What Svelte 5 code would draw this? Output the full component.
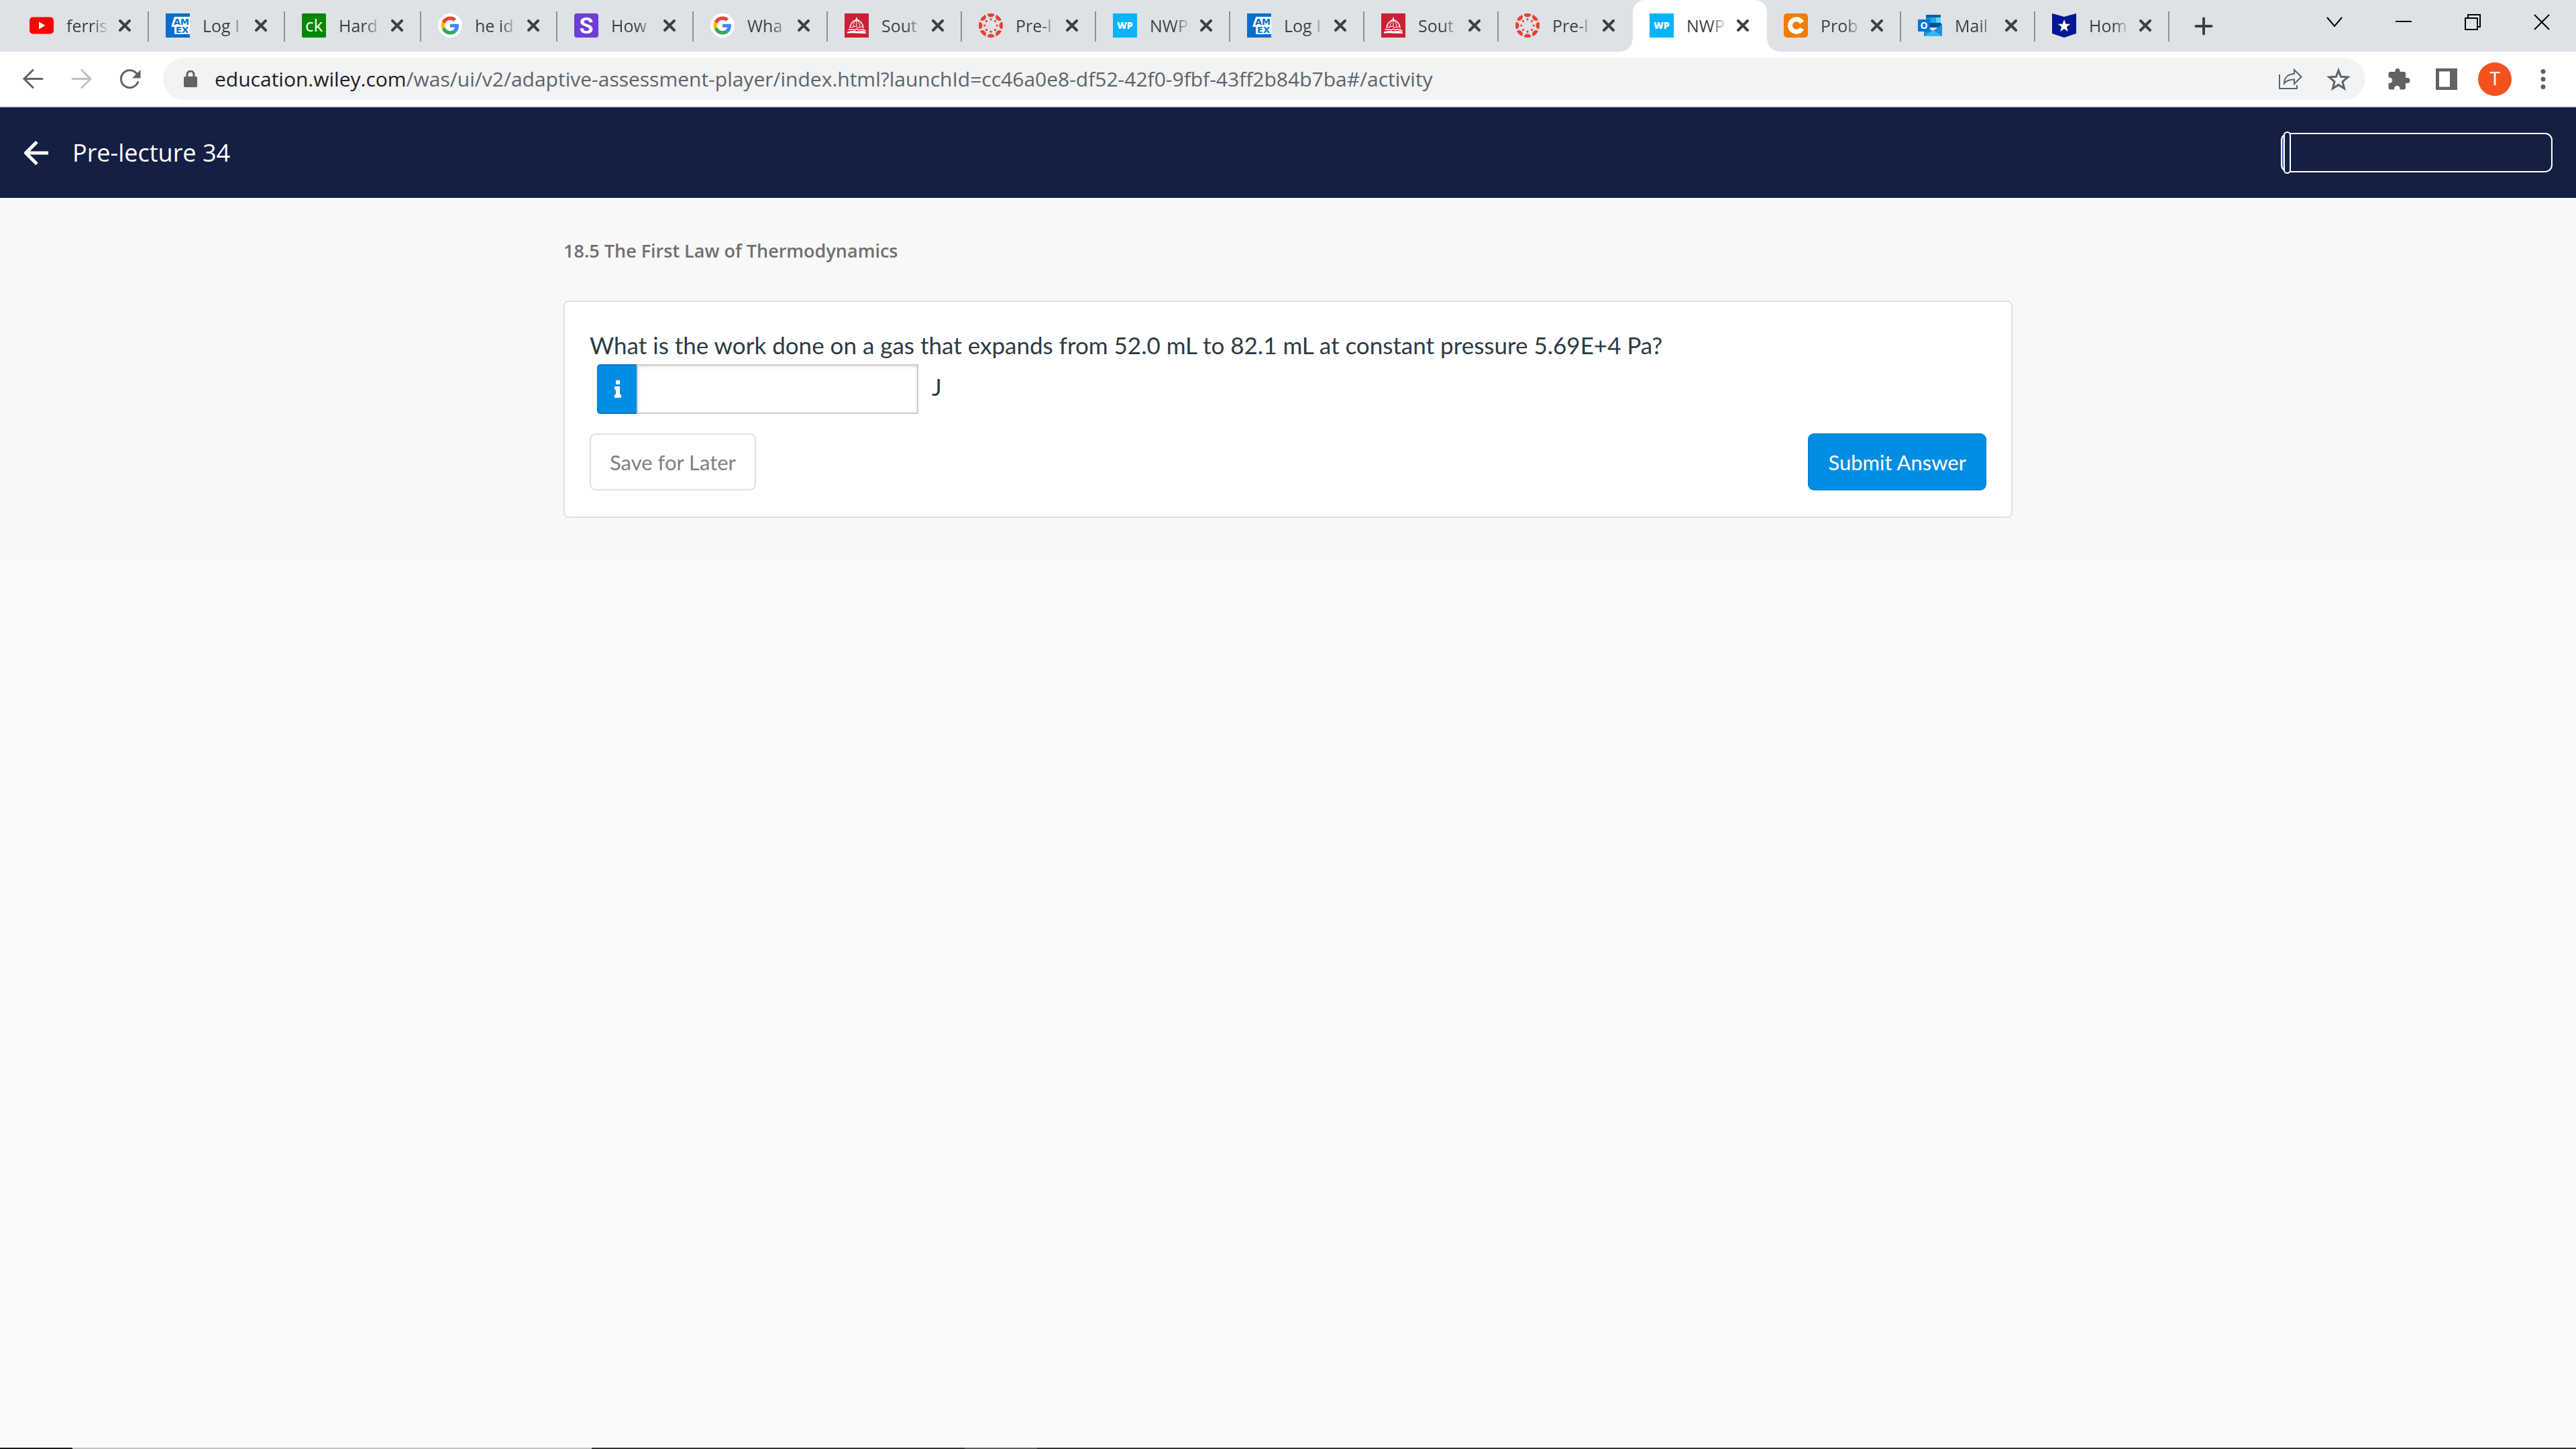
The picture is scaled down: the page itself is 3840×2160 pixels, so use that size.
<script lang="ts">
	const tabs = [
		{ icon: 'youtube', title: 'ferris' },
		{ icon: 'amex', title: 'Log I' },
		{ icon: 'ck', title: 'Hard' },
		{ icon: 'google', title: 'he id' },
		{ icon: 'study', title: 'How' },
		{ icon: 'google', title: 'Wha' },
		{ icon: 'dome', title: 'Sout' },
		{ icon: 'canvas', title: 'Pre-l' },
		{ icon: 'wp', title: 'NWP' },
		{ icon: 'amex', title: 'Log I' },
		{ icon: 'dome', title: 'Sout' },
		{ icon: 'canvas', title: 'Pre-l' },
		{ icon: 'wp', title: 'NWP', active: true },
		{ icon: 'chegg', title: 'Prob' },
		{ icon: 'outlook', title: 'Mail' },
		{ icon: 'star', title: 'Hom' }
	];

	const petals = [0, 45, 90, 135, 180, 225, 270, 315];

	let answer = $state('');
	let progress = $state(0);
</script>

{#snippet favicon(name: string)}
	<svg class="favicon" viewBox="0 0 36 36" aria-hidden="true">
		{#if name === 'youtube'}
			<rect y="5.5" width="36" height="25" rx="5" fill="#f00" />
			<path d="M14 12.5v11l9.500-5.500z" fill="#fff" />
		{:else if name === 'amex'}
			<rect width="36" height="36" fill="#016fd0" />
			<path d="M13 5h23v26H13V20H8z" fill="#fff" />
			<g fill="#016fd0" font-family="DejaVu Sans, sans-serif" font-weight="700" font-size="13">
				<text x="12" y="17">AM</text>
				<text x="15" y="29">EX</text>
			</g>
		{:else if name === 'ck'}
			<rect width="36" height="36" rx="2" fill="#080" />
			<text x="18" y="27" text-anchor="middle" fill="#fff" font-family="Open Sans, sans-serif" font-size="26">ck</text>
		{:else if name === 'google'}
			<circle cx="18" cy="18" r="18" fill="#fff" />
			<g transform="translate(4.500 4.500) scale(.5625)">
				<path fill="#ea4335" d="M24 9.500c3.540 0 6.710 1.220 9.210 3.600l6.850-6.850C35.900 2.380 30.470 0 24 0 14.620 0 6.510 5.380 2.560 13.220l7.980 6.190C12.430 13.720 17.740 9.500 24 9.500z" />
				<path fill="#4285f4" d="M46.980 24.550c0-1.570-.15-3.090-.38-4.550H24v9.020h12.940c-.58 2.960-2.260 5.480-4.780 7.180l7.730 6c4.510-4.180 7.090-10.360 7.090-17.650z" />
				<path fill="#fbbc05" d="M10.530 28.590c-.48-1.450-.76-2.990-.76-4.590s.27-3.140.76-4.590l-7.980-6.190C.92 16.460 0 20.120 0 24c0 3.880.92 7.540 2.560 10.780l7.970-6.190z" />
				<path fill="#34a853" d="M24 48c6.480 0 11.930-2.130 15.890-5.810l-7.730-6c-2.150 1.450-4.920 2.300-8.160 2.300-6.260 0-11.570-4.220-13.470-9.910l-7.980 6.190C6.510 42.620 14.620 48 24 48z" />
			</g>
		{:else if name === 'study'}
			<rect width="36" height="36" rx="4" fill="#6d3fd4" />
			<text x="18" y="30" text-anchor="middle" fill="#fff" font-family="Roboto, sans-serif" font-weight="700" font-size="34">S</text>
		{:else if name === 'dome'}
			<rect width="36" height="36" fill="#c92035" />
			<g fill="none" stroke="#fff" stroke-linecap="round">
				<path d="M18 6.500v3" stroke-width="1.500" />
				<path d="M8 21c1-7 5-10 10-12 5 2 9 5 10 12" stroke-width="1.500" />
				<path d="M13 20c0-5 2-8 5-10M23 20c0-5-2-8-5-10M18 11v8M9 21l8-2 2 2 8-1" />
				<path d="M6 24h8M22 24h7M15 25l3-2 3 2" stroke-width="1.500" />
				<path d="M5 29c7-5 12 1 26-3M5 28l26 1" stroke-width="2" />
			</g>
		{:else if name === 'canvas'}
			<g fill="#e73f30">
				{#each petals as angle}
					<g transform="rotate({angle} 18 18)">
						<path d="M12.500 1Q18-1 23.500 1 22.500 5.500 18 5.500T12.500 1z" />
						<circle cx="18" cy="8.800" r="1.600" />
					</g>
				{/each}
			</g>
		{:else if name === 'wp'}
			<rect width="36" height="36" fill="#07b3fb" />
			<text x="18" y="23" text-anchor="middle" fill="#fff" font-family="Open Sans, sans-serif" font-weight="800" font-size="14">WP</text>
		{:else if name === 'chegg'}
			<rect width="36" height="36" rx="5" fill="#f07c00" />
			<path d="M27 13.500A9.300 9.300 0 1 0 27 22.500" fill="none" stroke="#fff" stroke-width="7" />
		{:else if name === 'outlook'}
			<path d="M12 2h22v14H12z" fill="#1490df" />
			<path d="M12 2h22v4H12z" fill="#0f5ea8" />
			<path d="M19 6h8v8h-8z" fill="#28a8ea" />
			<path d="M27 6h7v8h-7z" fill="#50d9ff" />
			<path d="M12 14h22l2 3v4H12z" fill="#0a4f95" />
			<path d="M9 20l14 6 13-10v18H9z" fill="#1a8fdd" />
			<path d="M23 25l13 9H9z" fill="#35b8f1" />
			<rect y="9" width="18" height="18" rx="1" fill="#0875d1" />
			<text x="9" y="23" text-anchor="middle" fill="#fff" font-family="Open Sans, sans-serif" font-weight="700" font-size="14">O</text>
		{:else}
			<path d="M0 0l18 5L36 0v30l-18 6-18-6z" fill="#001892" />
			<path d="M18 9l2.400 6.800h7l-5.600 4.300 2 7L18 23l-5.800 4.100 2-7-5.600-4.300h7z" fill="#fff" />
		{/if}
	</svg>
{/snippet}

<div class="page">
	<div class="tab-strip">
		<div class="tabs">
			{#each tabs as tab}
				<div class="tab" class:active={tab.active}>
					{@render favicon(tab.icon)}
					<span class="tab-title">{tab.title}</span>
					<button class="tab-close" aria-label="Close tab">
						<svg viewBox="0 0 18 18"><path d="M2 2l14 14M16 2L2 16" /></svg>
					</button>
				</div>
			{/each}
		</div>
		<button class="new-tab" aria-label="New tab">
			<svg viewBox="0 0 36 36"><path d="M18 6.500v23M6.500 18h23" /></svg>
		</button>
		<div class="window-controls">
			<button aria-label="Search tabs">
				<svg viewBox="0 0 24 24"><path d="M1 5l11 13L23 5" /></svg>
			</button>
			<button aria-label="Minimize">
				<svg viewBox="0 0 24 24"><path d="M0 11h24" /></svg>
			</button>
			<button aria-label="Restore">
				<svg viewBox="0 0 24 24"><path d="M1 6h18v17H1zM5 6V1h18v18h-4" /></svg>
			</button>
			<button aria-label="Close">
				<svg viewBox="0 0 24 24"><path d="M1 1l22 22M23 1L1 23" /></svg>
			</button>
		</div>
	</div>

	<div class="toolbar">
		<div class="nav">
			<button aria-label="Back">
				<svg viewBox="0 0 36 36"><path class="line" d="M31 17.500H5M17 4.500l-13 13 13 13" /></svg>
			</button>
			<button aria-label="Forward" disabled>
				<svg viewBox="0 0 36 36"><path class="line" d="M4 17.500h27M18 4.500l13 13-13 13" /></svg>
			</button>
			<button aria-label="Reload">
				<svg viewBox="0 0 36 36">
					<path class="line" d="M29.500 22.500A13 13 0 1 1 27.500 9.500" />
					<path class="solid" d="M33.500 4v12.500H21z" />
				</svg>
			</button>
		</div>
		<div class="address">
			<svg class="lock" viewBox="0 0 20 26" aria-hidden="true">
				<rect class="solid" x="0" y="9" width="20" height="16" rx="2" />
				<path class="line" d="M5 10V6a5 5 0 0 1 10 0v4" />
			</svg>
			<span class="url">education.wiley.com<span class="path">/was/ui/v2/adaptive-assessment-player/index.html?launchId=cc46a0e8-df52-42f0-9fbf-43ff2b84b7ba#/activity</span></span>
			<button aria-label="Share">
				<svg viewBox="0 0 36 36">
					<path class="thin" d="M2 11v21h26v-5" />
					<path class="thin" d="M24 4l10.500 10.500L24 25v-6.500c-8 0-12 2-15 6 0-9 6-14 15-14.500z" />
				</svg>
			</button>
			<button aria-label="Bookmark this page">
				<svg viewBox="0 0 36 36"><path class="star" d="M18 5l3.600 9.300 10.400.7-8 6.700 2.600 10.300L18 26.400 9.400 32 12 21.700l-8-6.700 10.400-.7z" /></svg>
			</button>
		</div>
		<div class="extras">
			<button aria-label="Extensions">
				<svg viewBox="0 0 36 36"><path class="solid" d="M28 16V10a3 3 0 0 0-3-3h-5.500V5.500a3.500 3.500 0 0 0-7 0V7H5.500a3 3 0 0 0-3 3v5.500H4a4 4 0 0 1 0 8.500H2.500v6.500a3 3 0 0 0 3 3H11V32a4 4 0 0 1 8.500 0v1.500H25a3 3 0 0 0 3-3V24h2.500a4 4 0 0 0 0-8z" /></svg>
			</button>
			<button aria-label="Side panel">
				<svg viewBox="0 0 36 36"><path class="solid" fill-rule="evenodd" d="M2 2h32v32H2zM7 6.500v23h16v-23z" /></svg>
			</button>
			<button class="avatar" aria-label="Profile">T</button>
			<button aria-label="Menu">
				<svg viewBox="0 0 36 36">
					<circle class="solid" cx="18" cy="6.500" r="3.500" />
					<circle class="solid" cx="18" cy="18" r="3.500" />
					<circle class="solid" cx="18" cy="29.500" r="3.500" />
				</svg>
			</button>
		</div>
	</div>

	<header class="course-bar">
		<button class="back" aria-label="Back to course">
			<svg viewBox="0 0 36 36"><path d="M36 18H3M19 1.500L2.500 18 19 34.500" /></svg>
		</button>
		<h1>Pre-lecture 34</h1>
		<input type="range" class="mastery" min="0" max="100" aria-label="Progress" bind:value={progress} />
	</header>

	<main>
		<div class="content">
			<h2>18.5 The First Law of Thermodynamics</h2>
			<form class="card" onsubmit={(e) => e.preventDefault()}>
				<label class="question" for="answer">
					What is the work done on a gas that expands from 52.0 mL to 82.1 mL at constant pressure 5.69E+4 Pa?
				</label>
				<div class="answer">
					<button type="button" class="info" aria-label="Answer format">
						<svg viewBox="0 0 12 26"><path d="M3 0h6v6H3zM1 9h8v12h2v5H1v-5h2v-7H1z" /></svg>
					</button>
					<input id="answer" type="text" autocomplete="off" bind:value={answer} />
					<span class="unit">J</span>
				</div>
				<div class="actions">
					<button type="button" class="save">Save for Later</button>
					<button type="submit" class="submit">Submit Answer</button>
				</div>
			</form>
		</div>
	</main>
	<div class="taskbar-edge"></div>
</div>

<style>
	:global(body) {
		margin: 0;
		background: #fafafa;
	}

	.page {
		display: flex;
		flex-direction: column;
		min-height: 100vh;
		font-family: 'Open Sans', 'Noto Sans', sans-serif;
	}

	button {
		padding: 0;
		border: 0;
		background: none;
		font-family: inherit;
	}

	svg {
		display: block;
	}

	/* tab strip */
	.tab-strip {
		display: flex;
		align-items: stretch;
		height: 77px;
		padding-left: 19px;
		background: #dee1e6;
	}

	.tabs {
		display: flex;
		flex: 0 1 auto;
		min-width: 0;
	}

	.tab {
		position: relative;
		display: flex;
		align-items: center;
		box-sizing: border-box;
		width: 200px;
		min-width: 0;
		padding: 0 27px 1px 25px;
	}

	.tab:nth-child(-n + 5) {
		width: 203px;
	}

	.tab::after {
		content: '';
		position: absolute;
		top: 17px;
		right: 0;
		width: 2px;
		height: 45px;
		background: #8d9095;
	}

	.tab.active {
		border-radius: 18px 18px 0 0;
		background: #fff;
	}

	.tab:has(+ .active)::after {
		display: none;
	}

	/* flared feet of the open tab */
	.tab.active::before,
	.tab.active::after {
		content: '';
		position: absolute;
		top: auto;
		bottom: 0;
		width: 18px;
		height: 18px;
	}

	.tab.active::before {
		left: -18px;
		background: radial-gradient(circle at 0 0, transparent 17px, #fff 18px);
	}

	.tab.active::after {
		right: -18px;
		background: radial-gradient(circle at 100% 0, transparent 17px, #fff 18px);
	}

	.favicon {
		flex: none;
		width: 36px;
		height: 36px;
	}

	.tab-title {
		flex: 1;
		min-width: 0;
		margin: 0 14px 0 19px;
		color: #3c4043;
		font-size: 25px;
		line-height: 36px;
		white-space: nowrap;
		mask-image: linear-gradient(to right, #000 60%, transparent);
	}

	.tab-close {
		flex: none;
		width: 18px;
		height: 18px;
	}

	.tab-close path,
	.new-tab path {
		stroke: #3c4043;
		stroke-width: 4;
		stroke-linecap: round;
	}

	.new-tab {
		flex: none;
		width: 36px;
		margin-left: 33px;
	}

	.window-controls {
		display: flex;
		flex: none;
		height: 66px;
		margin-left: auto;
	}

	.window-controls button {
		display: flex;
		align-items: center;
		justify-content: center;
		width: 103px;
	}

	.window-controls svg {
		width: 24px;
		height: 24px;
		fill: none;
		stroke: #000;
		stroke-width: 2;
	}

	/* toolbar */
	.toolbar {
		display: flex;
		align-items: center;
		height: 81px;
		padding: 0 31px 0 32px;
		border-bottom: 2px solid #dadcdc;
		background: #fff;
	}

	.toolbar svg {
		width: 36px;
		height: 36px;
	}

	.toolbar .solid {
		fill: #5f6368;
	}

	.toolbar .line,
	.toolbar .thin,
	.toolbar .star {
		fill: none;
		stroke: #5f6368;
		stroke-width: 3;
		stroke-linecap: round;
	}

	.toolbar .thin {
		stroke-width: 2;
		stroke-linecap: butt;
	}

	.toolbar .star {
		stroke-linecap: butt;
	}

	.nav {
		display: flex;
		gap: 36px;
	}

	.nav button:disabled {
		opacity: 0.4;
	}

	.address {
		display: flex;
		flex: 1;
		align-items: center;
		min-width: 0;
		height: 63px;
		margin: 0 32px 0 31px;
		padding: 0 22px 0 31px;
		border-radius: 32px;
		box-sizing: border-box;
		background: #f1f3f4;
	}

	.address .lock {
		flex: none;
		width: 20px;
		height: 26px;
	}

	.url {
		flex: 1;
		min-width: 0;
		margin-left: 26px;
		overflow: hidden;
		color: #202124;
		font-size: 30px;
		line-height: 48px;
		white-space: nowrap;
	}

	.path {
		color: #5f6368;
	}

	.address button + button {
		margin-left: 36px;
	}

	.extras {
		display: flex;
		align-items: center;
		gap: 35px;
	}

	.avatar {
		width: 50px;
		height: 50px;
		margin: 0 -6px;
		border-radius: 50%;
		background: #f4511e;
		color: #fff;
		font-family: Roboto, sans-serif;
		font-size: 28px;
		line-height: 50px;
	}

	/* course bar */
	.course-bar {
		display: flex;
		align-items: center;
		height: 135px;
		padding: 0 35px 0 36px;
		background: #141f44;
		color: #fff;
	}

	.back svg {
		width: 36px;
		height: 36px;
		fill: none;
		stroke: #fff;
		stroke-width: 5;
	}

	h1 {
		margin: 0 auto 0 36px;
		font-size: 36px;
		font-weight: 400;
		line-height: 48px;
	}

	.mastery {
		box-sizing: border-box;
		width: 405px;
		height: 59px;
		margin: 0;
		padding: 0 2px;
		border: 2px solid #fff;
		border-radius: 11px;
		appearance: none;
		background: linear-gradient(to right, #5470b4 8px, #141f44 8px);
	}

	.mastery::-webkit-slider-thumb {
		appearance: none;
		box-sizing: border-box;
		width: 11px;
		height: 63px;
		border: 2px solid #fff;
		border-radius: 6px;
		background: #141f44;
	}

	/* activity */
	main {
		padding: 59px 36px;
		background: #f8f8f8;
	}

	.content {
		max-width: 2160px;
		margin: 0 auto;
	}

	h2 {
		margin: 0 0 54px;
		color: #707070;
		font-size: 27px;
		font-weight: 600;
		line-height: 40px;
	}

	.card {
		padding: 38px 37px 39px;
		border: 2px solid #e0e0e0;
		border-radius: 8px;
		background: #fff;
		color: #2d3b45;
		font-family: Lato, 'Open Sans', sans-serif;
	}

	.question {
		display: block;
		margin-bottom: 2px;
		font-size: 35px;
		line-height: 53px;
	}

	.answer {
		display: flex;
		margin-left: 11px;
	}

	.info {
		display: flex;
		align-items: center;
		justify-content: center;
		box-sizing: border-box;
		width: 59px;
		height: 74px;
		border: 2px solid #0079cc;
		border-right: 0;
		border-radius: 5px 0 0 5px;
		background: #008ee5;
	}

	.info svg {
		width: 12px;
		height: 26px;
		fill: #fff;
	}

	.answer input {
		box-sizing: border-box;
		width: 420px;
		height: 74px;
		padding: 0 12px;
		border: 2px solid #ccc;
		border-radius: 0;
		background: #fff;
		box-shadow: inset 0 2px 4px rgba(0, 0, 0, 0.12);
		font: 31px Lato, sans-serif;
	}

	.unit {
		margin-left: 20px;
		font-size: 35px;
		line-height: 66px;
	}

	.actions {
		display: flex;
		justify-content: space-between;
		margin-top: 29px;
	}

	.actions button {
		height: 85px;
		padding: 0 28px;
		border: 2px solid #e0e0e0;
		border-radius: 9px;
		background: #fff;
		color: #808080;
		font-size: 31px;
	}

	.actions .submit {
		border-color: #0081d1;
		background: #008ee5;
		color: #fff;
	}

	/* sliver of the desktop taskbar under the window */
	.taskbar-edge {
		height: 2px;
		margin-top: auto;
		background: linear-gradient(
			to right,
			#1f1b1c 108px,
			#c2c2c2 108px 882px,
			#333 882px 1438px,
			#5c5c5c 1438px 1546px,
			#333 1546px
		);
	}
</style>
